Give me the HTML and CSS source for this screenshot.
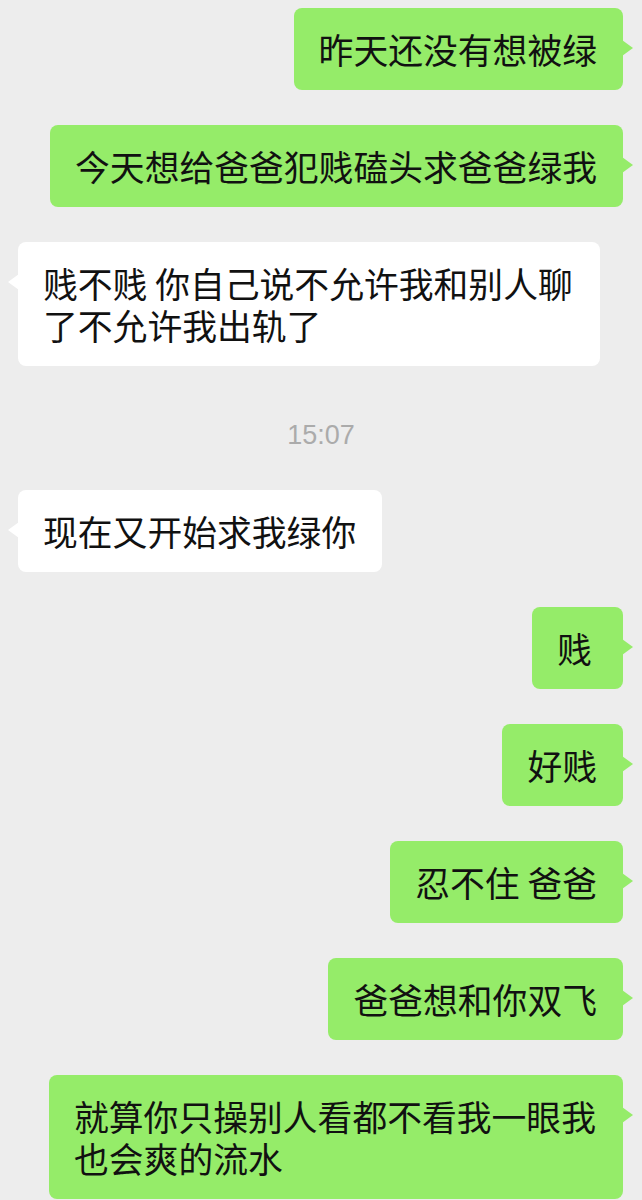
FILE: index.html
```html
<!DOCTYPE html>
<html lang="zh-CN">
<head>
<meta charset="utf-8">
<link rel="stylesheet" href="styles.css">
</head>
<body>
<div class="chat">
  <div class="row me"><div class="bubble green">昨天还没有想被绿</div></div>
  <div class="row me"><div class="bubble green">今天想给爸爸犯贱磕头求爸爸绿我</div></div>
  <div class="row other"><div class="bubble white">贱不贱 你自己说不允许我和别人聊了不允许我出轨了</div></div>
  <div class="time">15:07</div>
  <div class="row other"><div class="bubble white">现在又开始求我绿你</div></div>
  <div class="row me"><div class="bubble green">贱</div></div>
  <div class="row me"><div class="bubble green">好贱</div></div>
  <div class="row me"><div class="bubble green">忍不住 爸爸</div></div>
  <div class="row me"><div class="bubble green">爸爸想和你双飞</div></div>
  <div class="row me"><div class="bubble green">就算你只操别人看都不看我一眼我也会爽的流水</div></div>
</div>
</body>
</html>
```
FILE: styles.css
```css
html, body {
  margin: 0;
  padding: 0;
  background: #ededed;
}
body {
  width: 642px;
  height: 1200px;
  overflow: hidden;
}
.chat {
  display: flex;
  flex-direction: column;
  gap: 35px;
  padding-top: 8px;
}
.row {
  display: flex;
}
.row.me {
  justify-content: flex-end;
  padding-right: 19px;
}
.row.other {
  justify-content: flex-start;
  padding-left: 18px;
}
.bubble {
  position: relative;
  box-sizing: border-box;
  min-width: 91px;
  font-family: "Noto Sans CJK SC", "Noto Sans", sans-serif;
  font-size: 34.8px;
  line-height: 42px;
  color: #111;
  border-radius: 8px;
  word-break: break-all;
}
.bubble.green {
  background: #95ec69;
  padding: 20px 26px 20px 25px;
  max-width: 574px;
}
.bubble.white {
  background: #ffffff;
  padding: 20px 26px 20px 25px;
  max-width: 582px;
}
.bubble.green::after,
.bubble.white::after {
  content: "";
  position: absolute;
  top: 32px;
  width: 0;
  height: 0;
  border-top: 8px solid transparent;
  border-bottom: 8px solid transparent;
}
.bubble.green::after {
  right: -10px;
  border-left: 11px solid #95ec69;
}
.bubble.white::after {
  left: -10px;
  border-right: 11px solid #ffffff;
}
.time {
  text-align: center;
  font-family: "Liberation Sans", Arial, sans-serif;
  font-size: 27px;
  line-height: 40px;
  padding-top: 14px;
  color: #ababab;
}
```
